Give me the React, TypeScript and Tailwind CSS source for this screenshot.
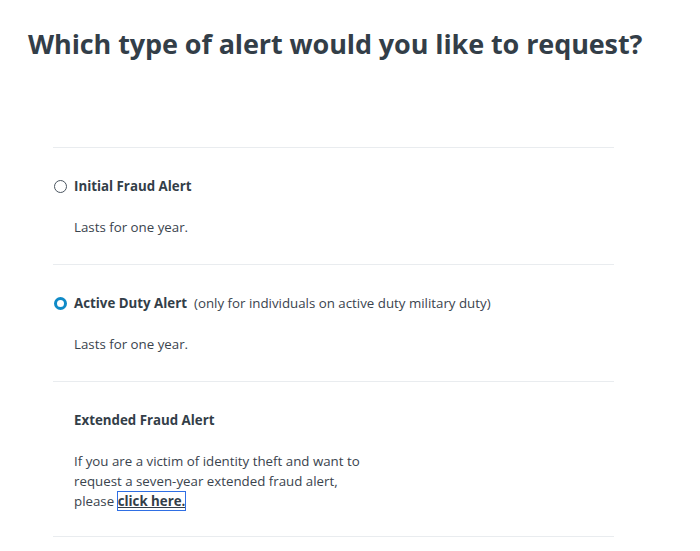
import React from "react";

function Radio({ checked }: { checked?: boolean }) {
  return checked ? (
    <span className="ml-[1px] block h-[13px] w-[13px] shrink-0 rounded-full border-[3px] border-[#0f8ac7] bg-white" />
  ) : (
    <span className="ml-[1px] block h-[13px] w-[13px] shrink-0 rounded-full border-[1.5px] border-[#4a5560] bg-white" />
  );
}

function Option({
  checked,
  label,
  note,
}: {
  checked?: boolean;
  label: string;
  note?: string;
}) {
  return (
    <div className="border-t border-[#e9ecef] pt-[28px] pb-[27px]">
      <label className="flex items-center gap-[7px] h-[20px] text-[13.3px] leading-[20px]">
        <Radio checked={checked} />
        <span className="font-bold text-[#333e48]">{label}</span>
        {note && <span className="text-[#3a444e]">{note}</span>}
      </label>
      <p className="mt-[21px] pl-[21px] text-[13.3px] leading-[20px] text-[#3a444e]">
        Lasts for one year.
      </p>
    </div>
  );
}

export default function App() {
  return (
    <div className="min-h-[551px] bg-white font-['Open_Sans',sans-serif] text-[#333e48]">
      <h1 className="pt-[29px] pl-[28px] text-[27px] font-bold leading-[30px] tracking-[-0.1px] text-[#333e48]">
        Which type of alert would you like to request?
      </h1>

      <div className="mt-[88px] ml-[53px] w-[561px]">
        <Option label="Initial Fraud Alert" />
        <Option
          checked
          label="Active Duty Alert"
          note="(only for individuals on active duty military duty)"
        />
        <div className="border-t border-[#e9ecef] pt-[28px] pb-[25px] pl-[21px]">
          <h2 className="h-[20px] text-[13.3px] font-bold leading-[20px] text-[#333e48]">
            Extended Fraud Alert
          </h2>
          <p className="mt-[21px] w-[300px] text-[13.3px] leading-[20px] text-[#3a444e]">
            If you are a victim of identity theft and want to request a
            seven-year extended fraud alert, please{" "}
            <a
              href="#"
              className="font-bold text-[#333e48] underline outline outline-[1.5px] outline-[#2f6fe4]"
            >
              click here.
            </a>
          </p>
        </div>
        <div className="border-t border-[#e9ecef]" />
      </div>
    </div>
  );
}
